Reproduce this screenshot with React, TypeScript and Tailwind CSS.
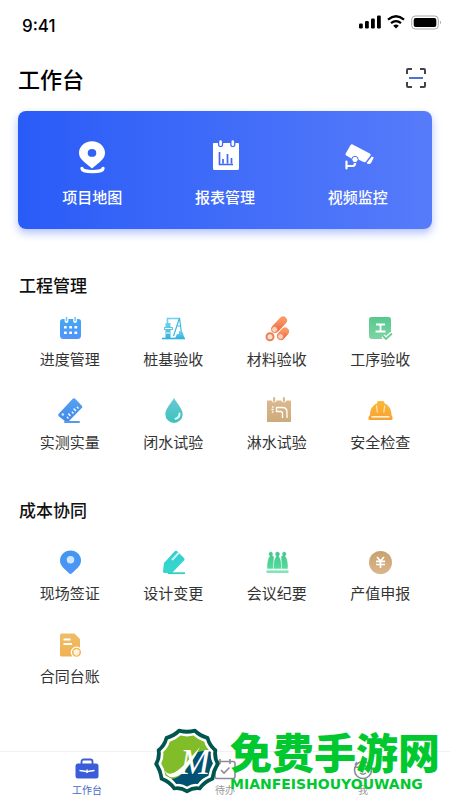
import type { ReactNode } from "react";

type Item = {
  label: string;
  icon: ReactNode;
};

type SectionProps = {
  title: string;
  items: Item[];
  gridClass: string;
};

function Gradient({ id, from, to }: { id: string; from: string; to: string }) {
  return (
    <defs>
      <linearGradient id={id} x1="0" y1="0" x2="0" y2="1">
        <stop offset="0" stopColor={from} />
        <stop offset="1" stopColor={to} />
      </linearGradient>
    </defs>
  );
}

function Icon({ children }: { children: ReactNode }) {
  return (
    <svg className="size-7" viewBox="0 0 28 28" fill="none" aria-hidden="true">
      {children}
    </svg>
  );
}

const shortcuts: Item[] = [
  {
    label: "项目地图",
    icon: (
      <svg className="size-9" viewBox="0 0 36 36" fill="none" aria-hidden="true">
        <path
          d="M18 2.300c-7.400 0-13 5.200-13 11.700 0 3.900 2.300 6.500 5.200 9L18 29.500l7.800-6.500c2.900-2.500 5.200-5.100 5.200-9C31 7.500 25.400 2.300 18 2.300Zm0 7.700a4.300 3.900 0 1 1 0 7.800 4.300 3.900 0 0 1 0-7.800Z"
          fill="#fff"
          fillRule="evenodd"
        />
        <path d="M8 29.500c.5 4.200 20.500 4.200 21 0" stroke="#fff" strokeWidth="3.400" strokeLinecap="round" />
      </svg>
    ),
  },
  {
    label: "报表管理",
    icon: (
      <svg className="size-9" viewBox="0 0 36 36" fill="none" aria-hidden="true">
        <path
          d="M6.500 4h4.500v1.500a2.600 2.600 0 0 0 5.200 0V4h7v1.500a2.600 2.600 0 0 0 5.200 0V4h2.600a1 1 0 0 1 1 1v24.500a1.500 1.500 0 0 1-1.500 1.500h-23A1.500 1.500 0 0 1 6 29.500V4.500Z"
          fill="#fff"
        />
        <path d="M13.600 2.500v3.200M25.800 2.500v3.200" stroke="#fff" strokeWidth="2.600" strokeLinecap="round" />
        <path d="M12.500 13v12.500H26M16 20v4.500M20.500 15v9.500M24.500 19v5.500" stroke="#3f68f8" strokeWidth="1.700" />
      </svg>
    ),
  },
  {
    label: "视频监控",
    icon: (
      <svg className="size-9" viewBox="0 0 36 36" fill="none" aria-hidden="true">
        <path
          d="m12.600 5.400 17.200 9.200c1 .6 1.100 1.300.5 2.200l-4.300 5.700c-.6.800-1.300 1-2.200.6l-4.600-2-2.600-1.600-3 1.300-7.400-4.300c-.8-.5-.9-1.200-.5-2l4.700-8.200c.5-.9 1.200-1.300 2.200-.9Z"
          fill="#fff"
        />
        <path d="m31.800 17.500 2 1-2.600 5.300c-1 1.500-3.800 1.600-4.600.3Z" fill="#fff" />
        <path d="M6.500 22.500v7M7.500 27h5q2.500 0 2.500-2.500V22" stroke="#fff" strokeWidth="2.200" strokeLinecap="round" />
        <circle cx="15" cy="20.500" r="3.200" fill="#fff" stroke="#4a70f9" strokeWidth="1" />
      </svg>
    ),
  },
];

const projectItems: Item[] = [
  {
    label: "进度管理",
    icon: (
      <Icon>
        <Gradient id="calendar" from="#43a7f3" to="#5393fa" />
        <path
          d="M7 5h1.600v2a1.900 1.900 0 0 0 3.800 0V5h4.800v2A1.900 1.900 0 0 0 21 7V5h1.500A2.500 2.500 0 0 1 25 7.500v14a3.500 3.500 0 0 1-3.500 3.500h-14A3.500 3.500 0 0 1 4 21.500V8a3 3 0 0 1 3-3Z"
          fill="url(#calendar)"
        />
        <path d="M10.500 3.500v3M19.100 3.500v3" stroke="#7fc0f8" strokeWidth="1.600" strokeLinecap="round" />
        <g fill="#fff">
          <rect x="8" y="12" width="2.800" height="2.600" rx=".6" />
          <rect x="13.200" y="12" width="2.800" height="2.600" rx=".6" />
          <rect x="18.400" y="12" width="2.800" height="2.600" rx=".6" />
          <rect x="8" y="17.500" width="2.800" height="2.600" rx=".6" />
          <rect x="13.200" y="17.500" width="2.800" height="2.600" rx=".6" />
          <rect x="18.400" y="17.500" width="2.800" height="2.600" rx=".6" />
        </g>
      </Icon>
    ),
  },
  {
    label: "桩基验收",
    icon: (
      <Icon>
        <Gradient id="rig" from="#6ed0ee" to="#35b3dc" />
        <path d="M8.500 9V4.500H21" stroke="#6ed0ee" strokeWidth="1.600" />
        <path d="M6.500 9h5v4H14v3h-2.500v8.500h-5V16H5v-3h1.500Z" fill="url(#rig)" />
        <path d="M6 14.500h7M7 19h4" stroke="#fff" strokeWidth="1" />
        <path d="M20.500 4 14.500 22M20.500 4l2 15M18.500 12h3" stroke="#3dbbe0" strokeWidth="1.200" />
        <path d="M16 24.500 18 20h2v-3h3l1 2.500 1.500 5Z" fill="url(#rig)" />
        <path d="M3 24.500h23" stroke="#35b3dc" strokeWidth="1.600" />
      </Icon>
    ),
  },
  {
    label: "材料验收",
    icon: (
      <Icon>
        <Gradient id="pipe" from="#fb9562" to="#ef7147" />
        <g stroke="url(#pipe)" strokeWidth="8" strokeLinecap="round">
          <path d="m12.500 14.500 7.500-8" />
          <path d="m18 22 4-4.500" />
        </g>
        <circle cx="11.500" cy="15.500" r="3" fill="#fbd1bb" stroke="#ef8158" strokeWidth="1" />
        <circle cx="17.500" cy="22.500" r="3" fill="#fbd1bb" stroke="#ef8158" strokeWidth="1" />
        <circle cx="7" cy="22.800" r="3.500" fill="#fde4d8" stroke="#f08054" strokeWidth="2" />
      </Icon>
    ),
  },
  {
    label: "工序验收",
    icon: (
      <Icon>
        <Gradient id="process" from="#55c98e" to="#7ed4a2" />
        <path d="M5.500 3h17A2.500 2.500 0 0 1 25 5.500V20l-4 5H6a3 3 0 0 1-3-3V5.500A2.500 2.500 0 0 1 5.500 3Z" fill="url(#process)" />
        <path d="M10 10.500h9M14.500 10.500v7M9.500 17.500h10" stroke="#fff" strokeWidth="1.800" />
        <path d="m17 22 3 3 6-5.500" stroke="#fff" strokeWidth="4.500" />
        <path d="m17 22 3 3 6-5.500" stroke="#67cf98" strokeWidth="1.800" />
      </Icon>
    ),
  },
  {
    label: "实测实量",
    icon: (
      <Icon>
        <Gradient id="ruler" from="#54a3f3" to="#4089e8" />
        <path
          d="m19.200 1.800 6.600 6.900c.8.900.7 1.500 0 2.300L12.500 24.500c-1 .9-2 .9-3 0L3 19.500c-1-1-.9-2 0-3L16.500 2c.9-1 1.800-1.100 2.700-.2Z"
          fill="url(#ruler)"
        />
        <path d="M9 25h14" stroke="#5499ed" strokeWidth="2" strokeLinecap="round" />
        <g stroke="#fff" strokeWidth="1.500" strokeLinecap="round">
          <path d="m12 21-.7-.7M14 18.500 12.800 17M17 16l-.7-.7M19.500 13.500 18 12M22 11l-.7-.7" />
        </g>
        <circle cx="6.800" cy="17.500" r="1.300" fill="#d4e8fc" />
      </Icon>
    ),
  },
  {
    label: "闭水试验",
    icon: (
      <Icon>
        <Gradient id="drop" from="#69c8d6" to="#3cc3bb" />
        <path d="M15 1c-2.500 5-8.700 10.500-8.700 16.200a8.700 8.700 0 0 0 17.400 0C23.700 11.500 17.500 6 15 1Z" fill="url(#drop)" />
        <path d="M20.500 16.500c0 3-1.500 4.700-4 5.300" stroke="#e3faf8" strokeWidth="2" strokeLinecap="round" />
      </Icon>
    ),
  },
  {
    label: "淋水试验",
    icon: (
      <Icon>
        <Gradient id="shower" from="#dcb98e" to="#ccaa7b" />
        <path
          d="M4 3.500h4.500a2.700 2.700 0 0 0 5.200 0h4.600a2.700 2.700 0 0 0 5.200 0H27a1 1 0 0 1 1 1V25H4Z"
          fill="url(#shower)"
        />
        <path d="M11.100 1v3M20.900 1v3" stroke="#d8b78d" strokeWidth="2" strokeLinecap="round" />
        <path d="M13.500 10.500h6q4.500 0 4.500 4.500v6M13.500 14.500h4q2 0 2 2v4.500M13.500 10v5M9 9.500l1.500 1M8.500 12.500h2M9 15.500l1.500-1" stroke="#fff" strokeWidth="1.300" />
      </Icon>
    ),
  },
  {
    label: "安全检查",
    icon: (
      <Icon>
        <Gradient id="helmet" from="#fbb733" to="#f7a237" />
        <path
          d="M4 18c0-6 3-10.200 7-11.500V6a2 2 0 0 1 2-2h3.500a2 2 0 0 1 2 2v.5c4 1.300 7 5.500 7 11.500l1 2v2a1 1 0 0 1-1 1h-22a1 1 0 0 1-1-1v-2Z"
          fill="url(#helmet)"
        />
        <path d="M5.500 19.800h18" stroke="#fff3d7" strokeWidth="1.600" />
        <path d="m10.500 9 .8 6M18.700 9l-.8 6" stroke="#fde4ad" strokeWidth="1.300" strokeLinecap="round" />
      </Icon>
    ),
  },
];

const costItems: Item[] = [
  {
    label: "现场签证",
    icon: (
      <Icon>
        <Gradient id="pin" from="#4197ed" to="#4d95fa" />
        <path
          d="M14.500 2.500C8.500 2.500 4 7 4 12.500c0 3.500 1.800 6 4.200 8.300l4.800 4.500q1.500 1.300 3 0l4.800-4.500C23.200 18.500 25 16 25 12.500c0-5.500-4.500-10-10.500-10Z"
          fill="url(#pin)"
        />
        <circle cx="14.500" cy="11.800" r="3.800" fill="#cfe5fc" />
      </Icon>
    ),
  },
  {
    label: "设计变更",
    icon: (
      <Icon>
        <Gradient id="pen" from="#35cbd4" to="#35d9c9" />
        <path d="M15.500 3.500q1.500-1.500 3 0l6.500 6.500q1.300 1.300 0 2.500L13 25H5.500a1.500 1.500 0 0 1-1.500-1.500L5 15Z" fill="url(#pen)" />
        <path d="m13 12 7-7.500" stroke="#c6f5f2" strokeWidth="2" />
        <path d="M9 25.200h17" stroke="#35cec5" strokeWidth="1.800" />
      </Icon>
    ),
  },
  {
    label: "会议纪要",
    icon: (
      <Icon>
        <Gradient id="people" from="#43c48d" to="#53dd9b" />
        <g fill="url(#people)" stroke="#fff" strokeWidth=".6">
          <path d="M8 3.500a2.500 2.500 0 0 0-1.500 4.500C4.500 11 3.500 16 4 21h7V8L9.500 7.500A2.500 2.500 0 0 0 8 3.500Z" />
          <path d="M21 3.500a2.500 2.500 0 0 1 1.500 4.500c2 3 3 8 2.500 13h-7V8l1.500-.5A2.500 2.500 0 0 1 21 3.500Z" />
          <path d="M14.500 3.500A2.500 2.500 0 0 0 13 8c-2 3-3 8-2.500 13h8C19 16 18 11 16 8a2.500 2.500 0 0 0-1.500-4.500Z" />
        </g>
        <path d="M3.500 23.700h22" stroke="#82e5b6" strokeWidth="2.600" />
      </Icon>
    ),
  },
  {
    label: "产值申报",
    icon: (
      <Icon>
        <Gradient id="coin" from="#c7a16d" to="#dcb68b" />
        <circle cx="14.500" cy="14.500" r="11.500" fill="url(#coin)" />
        <path d="m11 9 3.500 4L18 9M14.500 13v7M10 13.300h9M10 16.500h9" stroke="#fff" strokeWidth="1.700" />
      </Icon>
    ),
  },
  {
    label: "合同台账",
    icon: (
      <Icon>
        <Gradient id="contract" from="#eebd68" to="#f1b150" />
        <path d="M5.500 2.500h13L24 8v17.500H5.500A1.500 1.500 0 0 1 4 24V4a1.500 1.500 0 0 1 1.500-1.500Z" fill="url(#contract)" />
        <path d="M7.500 8.500h7M7.500 13h8.500" stroke="#fff" strokeWidth="1.800" />
        <circle cx="20.500" cy="21.300" r="5.200" fill="#f4b758" stroke="#fff" strokeWidth="1.300" />
        <path d="m20.500 18 2.900 1.300v2.200c0 1.600-1.300 2.700-2.900 3.300-1.600-.6-2.900-1.700-2.900-3.300v-2.200Z" fill="#fff5df" />
      </Icon>
    ),
  },
];

function StatusBar() {
  return (
    <div className="flex items-start justify-between pt-3.5 pr-2 pl-[22px]">
      <span className="font-[Inter,sans-serif] text-[17px] leading-6 font-medium">9:41</span>
      <div className="flex items-center gap-1.5">
        <svg className="h-4 w-[22px]" viewBox="0 0 22 16" aria-hidden="true">
          <rect x="0" y="9.500" width="3.800" height="5" rx="1.200" />
          <rect x="6" y="7" width="3.800" height="7.500" rx="1.200" />
          <rect x="12" y="4.500" width="3.800" height="10" rx="1.200" />
          <rect x="18" y="1.500" width="3.800" height="13" rx="1.200" />
        </svg>
        <svg className="h-4 w-[18px]" viewBox="0 0 18 16" fill="none" stroke="#000" aria-hidden="true">
          <path d="M1 5.700Q9-1 17 5.700" strokeWidth="2.400" />
          <path d="M4 9.200q5-4.200 10 0" strokeWidth="2.300" />
          <path d="M6.200 11.700q2.800-2.300 5.600 0L9 14.600Z" fill="#000" stroke="none" />
        </svg>
        <svg className="h-4 w-[31px]" viewBox="0 0 31 16" fill="none" aria-hidden="true">
          <rect x=".7" y="2" width="26.600" height="13" rx="3.500" stroke="#aaa" strokeWidth="1" />
          <rect x="2.700" y="4" width="22.600" height="9" rx="2" fill="#000" />
          <path d="M29 6.500q2 2 0 4Z" fill="#aaa" />
        </svg>
      </div>
    </div>
  );
}

function Section({ title, items, gridClass }: SectionProps) {
  return (
    <section className="mt-11">
      <h2 className="px-px text-[17px] leading-6 font-medium text-[#111]">{title}</h2>
      <div className={`grid grid-cols-4 gap-y-[26px] ${gridClass}`}>
        {items.map((item) => (
          <button key={item.label} type="button" className="flex flex-col items-center gap-[5px]">
            {item.icon}
            <span className="text-[15px] leading-6 text-[#333]">{item.label}</span>
          </button>
        ))}
      </div>
    </section>
  );
}

function TabBar() {
  return (
    <nav className="mt-auto grid grid-cols-3 border-t border-[#f1f1f3] px-[18px] pt-[5px] pb-1 text-[10px] leading-3 text-[#999]">
      <a href="#work" className="flex flex-col items-center gap-[3px] text-[#4b68c9]">
        <svg className="size-6" viewBox="0 0 24 24" fill="none" aria-hidden="true">
          <path d="M6.500 8V4.500a2 2 0 0 1 2-2h7a2 2 0 0 1 2 2V8" stroke="#3a5cd4" strokeWidth="1.800" />
          <rect x=".5" y="6.500" width="23" height="15" rx="2.500" fill="#3a5cd9" />
          <path d="M4.500 13.500c3 0 4.500 1 6.500 1h2c2 0 3.500-1 6.500-1M12 12.500v3.500" stroke="#fff" strokeWidth="1.500" />
        </svg>
        工作台
      </a>
      <a href="#todo" className="flex flex-col items-center gap-[3px]">
        <svg className="size-6" viewBox="0 0 24 24" fill="none" stroke="#8f8a9b" strokeWidth="1.600" aria-hidden="true">
          <rect x="2" y="4.500" width="20" height="17" rx="2" />
          <path d="M7 2v5M17 2v5M8 13l3 3 5.500-5.500" />
        </svg>
        待办
      </a>
      <a href="#me" className="flex flex-col items-center gap-[3px]">
        <svg className="size-6" viewBox="0 0 24 24" fill="none" stroke="#8f8a9b" strokeWidth="1.600" aria-hidden="true">
          <circle cx="12" cy="13" r="8.500" />
          <path d="M4 10c4 1 7-1 8-4 1 3 4 5 8 4M9 16q3 2.500 6 0M6 5l-2 3M18 5l2 3" />
        </svg>
        我
      </a>
    </nav>
  );
}

function SiteBadge() {
  return (
    <div className="pointer-events-none absolute bottom-1.5 left-[154px] flex items-center gap-2.5">
      <svg className="size-[66px] shrink-0" viewBox="0 0 66 66" aria-hidden="true">
        <defs>
          <path
            id="seal"
            d="M25 2Q33 4 41 2Q46 7 54 9.500Q56 17 62 22Q61 30 64.500 36Q60 43 59 51Q51 54 46 61Q39 60 33 64Q27 60 20 61Q15 54 7 51Q6 43 1.500 36Q5 30 4 22Q10 17 12 9.500Q20 7 25 2Z"
          />
          <clipPath id="sealClip">
            <use href="#seal" transform="translate(5.940 5.940) scale(.82)" />
          </clipPath>
        </defs>
        <use href="#seal" fill="#00564e" stroke="#00564e" strokeWidth="2.500" strokeLinejoin="round" />
        <use href="#seal" transform="translate(2.970 2.970) scale(.91)" fill="#fff" />
        <g clipPath="url(#sealClip)">
          <path d="M0 0h66v66H0Z" fill="#80bd28" />
          <path d="M12 66 18 51C28 50 36 37 44 24L58 21l2-4h6v49Z" fill="#005173" />
        </g>
        <path
          d="M10.500 42c2 4 6 4.500 10 2.500C29 40 37 29 46 19c-5 10-12 21-20 27.500-6 4.500-13 4-15.500-4.500Z"
          fill="#fff"
        />
        <text x="26" y="46" fill="#fff" fontFamily="Liberation Serif, serif" fontStyle="italic" fontSize="36">
          M
        </text>
      </svg>
      <div className="text-[#00c82f]">
        <div className="text-[42px] leading-[46px] font-black">免费手游网</div>
        <div className="font-['DejaVu_Sans',sans-serif] text-sm leading-5 font-bold">MIANFEISHOUYOUWANG</div>
      </div>
    </div>
  );
}

function App() {
  return (
    <div className="relative flex min-h-screen flex-col overflow-hidden bg-white font-['Noto_Sans_CJK_SC',sans-serif] text-black">
      <StatusBar />
      <main className="px-[18px] pb-10">
        <header className="mt-6 flex h-8 items-center justify-between pr-1">
          <h1 className="text-[22px] leading-8 font-medium">工作台</h1>
          <button type="button" aria-label="扫一扫">
            <svg className="size-6" viewBox="0 0 24 24" fill="none" aria-hidden="true">
              <path
                d="M3 8V4a1 1 0 0 1 1-1h4M16 3h4a1 1 0 0 1 1 1v4M21 16v4a1 1 0 0 1-1 1h-4M8 21H4a1 1 0 0 1-1-1v-4"
                stroke="#444"
                strokeWidth="2"
              />
              <path d="M5 12h14" stroke="#4975cf" strokeWidth="2" />
            </svg>
          </button>
        </header>

        <div className="mt-[17px] grid grid-cols-3 rounded-lg bg-linear-to-r from-[#295bf7] to-[#567bfa] px-2 pt-7 pb-5 shadow-[0_4px_8px_rgba(60,100,250,0.4)]">
          {shortcuts.map((item) => (
            <button key={item.label} type="button" className="flex flex-col items-center gap-2.5">
              {item.icon}
              <span className="text-[15px] leading-6 font-medium text-white">{item.label}</span>
            </button>
          ))}
        </div>

        <Section title="工程管理" items={projectItems} gridClass="mt-[17px]" />
        <Section title="成本协同" items={costItems} gridClass="mt-[26px]" />
      </main>
      <TabBar />
      <SiteBadge />
    </div>
  );
}

export default App;
